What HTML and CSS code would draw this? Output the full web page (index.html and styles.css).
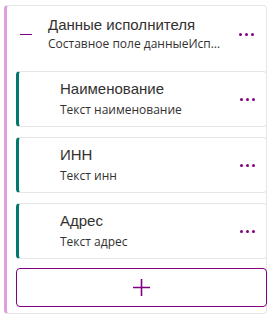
FILE: index.html
```html
<!DOCTYPE html>
<html lang="ru">
<head>
  <meta charset="UTF-8" />
  <meta name="viewport" content="width=device-width, initial-scale=1.0" />
  <title>Данные исполнителя</title>
  <link rel="stylesheet" href="styles.css">
</head>
<body>
  <div class="group">
    <div class="group-head">
      <span class="collapse"></span>
      <div class="info">
        <div class="title">Данные исполнителя</div>
        <div class="sub">Составное поле данныеИсполнителя</div>
      </div>
      <span class="more"><i></i><i></i><i></i></span>
    </div>
    <div class="fields">
      <div class="field">
        <div class="info">
          <div class="title">Наименование</div>
          <div class="sub">Текст наименование</div>
        </div>
        <span class="more"><i></i><i></i><i></i></span>
      </div>
      <div class="field">
        <div class="info">
          <div class="title">ИНН</div>
          <div class="sub">Текст инн</div>
        </div>
        <span class="more"><i></i><i></i><i></i></span>
      </div>
      <div class="field">
        <div class="info">
          <div class="title">Адрес</div>
          <div class="sub">Текст адрес</div>
        </div>
        <span class="more"><i></i><i></i><i></i></span>
      </div>
      <button class="add">
        <svg width="19" height="19" viewBox="0 0 19 19"><path d="M9.5 1v17M1 9.5h17" stroke="#800080" stroke-width="1.6" fill="none"/></svg>
      </button>
    </div>
  </div>
</body>
</html>
```

FILE: styles.css
```css
:root {
  --purple: #800080;
  --plum: #dda0dd;
  --teal: #00796b;
  --line: #e6e6e6;
  --text: #323130;
}
body {
  margin: 0;
  font-family: "Open Sans", sans-serif;
  background: #fff;
  color: var(--text);
}
.group {
  margin: 5px 7px 5px 4px;
  border: 1px solid var(--line);
  border-left: 3px solid var(--plum);
  border-radius: 4px;
  height: 309px;
  box-sizing: border-box;
}
.group-head {
  display: flex;
  align-items: flex-start;
  height: 65px;
  box-sizing: border-box;
  padding: 8px 12px 0 13px;
}
.collapse {
  width: 12px;
  height: 1px;
  background: var(--purple);
  margin: 20px 16px 0 0;
}
.info { flex: 1; min-width: 0; }
.title {
  font-family: "Liberation Sans", Arial, sans-serif;
  font-size: 15px;
  line-height: 22px;
}
.sub {
  font-size: 12px;
  line-height: 18px;
  margin-top: -1px;
  white-space: nowrap;
  overflow: hidden;
  text-overflow: ellipsis;
  max-width: 176px;
}
.more {
  display: flex;
  gap: 3px;
  margin-left: 8px;
}
.group-head .more { margin-top: 19px; }
.more i {
  width: 3px;
  height: 3px;
  border-radius: 50%;
  background: var(--purple);
}
.fields {
  display: flex;
  flex-direction: column;
  gap: 10px;
  padding: 0 0 0 9px;
  margin-right: -1px;
}
.field {
  display: flex;
  align-items: center;
  height: 56px;
  box-sizing: border-box;
  border: 1px solid var(--line);
  border-left: 3px solid var(--teal);
  border-radius: 4px;
  padding: 0 11px 2px 41px;
}
.field .title { line-height: 20px; }
.field .sub { line-height: 16px; margin-top: 3px; }
.field .more { margin-top: 2px; }
.add {
  height: 39px;
  margin-top: -1px;
  border: 1px solid var(--purple);
  border-radius: 4px;
  background: #fff;
  display: flex;
  align-items: center;
  justify-content: center;
  padding: 0;
}
.add svg { display: block; }
```
